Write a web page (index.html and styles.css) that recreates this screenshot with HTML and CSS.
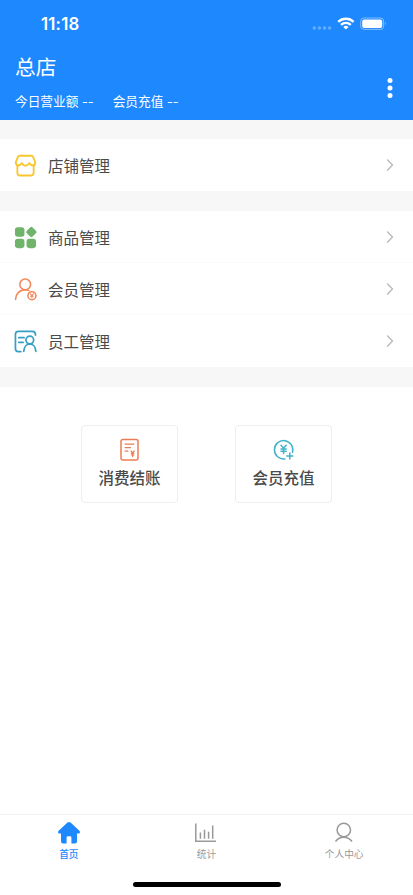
FILE: index.html
```html
<!DOCTYPE html>
<html lang="zh-CN">
<head>
<meta charset="utf-8">
<meta name="viewport" content="width=device-width, initial-scale=1">
<title>总店</title>
<link rel="stylesheet" href="styles.css">
</head>
<body>
<div class="app">
  <header class="header">
    <div class="status">
      <span class="time">11:18</span>
      <svg class="status-icons" width="76" height="16" viewBox="0 0 76 16">
        <g fill="#fff" opacity=".3"><circle cx="3.3" cy="12" r="1.8"/><circle cx="8.4" cy="12" r="1.8"/><circle cx="13.5" cy="12" r="1.8"/><circle cx="18.6" cy="12" r="1.8"/></g>
        <g fill="none" stroke="#fff" stroke-width="2.3"><path d="M27.2 5.800a11.200 11.200 0 0 1 15.400 0M30 8.800a7.200 7.200 0 0 1 9.800 0"/></g>
        <path d="M34.900 13.600l-2.600-2.700a3.800 3.800 0 0 1 5.200 0z" fill="#fff"/>
        <rect x="49.700" y="2" width="23" height="11.400" rx="3.200" fill="none" stroke="#fff" opacity=".45"/>
        <rect x="51.200" y="3.500" width="20" height="8.400" rx="2" fill="#fff"/>
        <path d="M74 5.800q1.600 1.900 0 3.800z" fill="#fff" opacity=".5"/>
      </svg>
    </div>
    <div class="shop">
      <div>
        <h1>总店</h1>
        <div class="stats"><span>今日营业额 <i>--</i></span><span>会员充值 <i>--</i></span></div>
      </div>
      <svg class="more" width="6" height="22" viewBox="0 0 6 22" fill="#fff"><circle cx="3" cy="3.500" r="2.500"/><circle cx="3" cy="11" r="2.500"/><circle cx="3" cy="18.500" r="2.500"/></svg>
    </div>
  </header>

  <main>
    <section class="group">
      <a class="row">
        <svg class="icon" viewBox="0 0 24 24" fill="none" stroke="#f9c62e" stroke-width="1.900" stroke-linejoin="round" stroke-linecap="round"><path d="M6.200 1.800h11.600q1.600 0 2.200 1.500l2.200 5.500q-.2 2.800-2 3.200-2.600.2-4.300-2.500-1.500 2.700-3.900 2.700T8.300 9.500Q6.600 12.200 4 12 2 11.500 1.800 8.800L4 3.300q.6-1.500 2.200-1.500z"/><path d="M3.500 12v7.500q0 2.900 2.900 2.900h11.200q2.900 0 2.900-2.900V12"/></svg>
        <span class="label">店铺管理</span>
        <svg class="arrow" viewBox="0 0 8 14"><path d="M1.200 1.500L6.500 7l-5.300 5.500"/></svg>
      </a>
    </section>
    <section class="group">
      <a class="row">
        <svg class="icon" viewBox="0 0 24 24" fill="#70b46b"><rect x="1" y="1.300" width="9.900" height="9.900" rx="2.900"/><rect x="1" y="13.200" width="9.900" height="9.900" rx="2.900"/><rect x="13.100" y="13.200" width="9.900" height="9.900" rx="2.900"/><rect x="13.800" y="2" width="8.600" height="8.600" rx="1.900" transform="rotate(45 18.100 6.300)"/></svg>
        <span class="label">商品管理</span>
        <svg class="arrow" viewBox="0 0 8 14"><path d="M1.200 1.500L6.500 7l-5.300 5.500"/></svg>
      </a>
      <a class="row">
        <svg class="icon" viewBox="0 0 24 24" fill="none" stroke="#f58659" stroke-width="1.600" stroke-linecap="round"><circle cx="11.700" cy="6.700" r="5.600"/><path d="M1.600 22.300c.2-5.500 3.900-10 10.100-10 1.600 0 2.800.4 3.800.8"/><circle cx="18.700" cy="18.500" r="4.200"/><path d="M17 16.500l1.700 1.900 1.700-1.900M18.700 18.400v2.400M17.300 19h2.800" stroke-width="1.100"/></svg>
        <span class="label">会员管理</span>
        <svg class="arrow" viewBox="0 0 8 14"><path d="M1.200 1.500L6.500 7l-5.300 5.500"/></svg>
      </a>
      <a class="row">
        <svg class="icon" viewBox="0 0 24 24" fill="none" stroke="#369fc4" stroke-width="1.800" stroke-linecap="round"><path d="M7.200 22.500H4.500q-3 0-3-3V4.500q0-3 3-3h15q2.900 0 2.900 3.800M5 8h5.500M5 13h4.500"/><circle cx="16.500" cy="10.500" r="4"/><path d="M10.200 22.200c.3-4.500 2.800-7.600 6.300-7.600s6 3.100 6.300 7.600"/></svg>
        <span class="label">员工管理</span>
        <svg class="arrow" viewBox="0 0 8 14"><path d="M1.200 1.500L6.500 7l-5.300 5.500"/></svg>
      </a>
    </section>
    <section class="actions">
      <a class="card">
        <svg width="22" height="24" viewBox="0 0 22 24" fill="none" stroke="#ef7b55" stroke-width="1.500" stroke-linecap="round"><rect x="2" y="1.500" width="17" height="20.400" rx="2"/><path d="M6.200 6.200h8.600M6.200 9.700h5.200M6.200 13.200h2.600" stroke-width="1.300"/><path d="M12 13l1.600 1.800 1.600-1.800M13.600 15v3.500M12.300 15.300h2.600M12.300 17h2.600" stroke-width="1.200"/></svg>
        <span>消费结账</span>
      </a>
      <a class="card">
        <svg width="22" height="24" viewBox="0 0 22 24" fill="none" stroke="#42b1c9" stroke-width="1.500" stroke-linecap="round"><path d="M11.900 20.900a9.200 9.200 0 1 1 7.600-6.700"/><path d="M8 7.200l2.600 3 2.600-3M10.600 10.200v5.300M8 10.900h5.200M8 13.200h5.200M16.800 14.900v6M13.800 17.900h6"/></svg>
        <span>会员充值</span>
      </a>
    </section>
  </main>

  <nav class="tabs">
    <a class="tab active">
      <svg width="24" height="24" viewBox="0 0 24 24" fill="#1e88ff"><path d="M10.500 1.600q1.500-1.100 3 0l8.900 8.200q.9.900.5 1.900-.3.700-1.200.7H20v8.100q0 2-2 2h-3.600v-6q0-1.200-1.200-1.200h-2.400q-1.200 0-1.200 1.200v6H6q-2 0-2-2v-8.100H2.300q-.9 0-1.200-.7-.4-1 .5-1.900z"/></svg>
      <span>首页</span>
    </a>
    <a class="tab">
      <svg width="24" height="24" viewBox="0 0 24 24" fill="none" stroke="#999" stroke-width="1.500"><path d="M1.800 2.500v17.700H22M6.400 11.500v6.200M10.500 8.700v9M14.600 10.700v7M18.700 4.500v13.200"/></svg>
      <span>统计</span>
    </a>
    <a class="tab">
      <svg width="24" height="24" viewBox="0 0 24 24" fill="none" stroke="#999" stroke-width="1.500"><circle cx="11.800" cy="9" r="6.700"/><path d="M3.500 20.500q3.200-4.200 8.300-4.200t8.200 4.200"/></svg>
      <span>个人中心</span>
    </a>
  </nav>
  <div class="home-bar"></div>
</div>
</body>
</html>
```
FILE: styles.css
```css
* { box-sizing: border-box; }
body {
  margin: 0;
  background: #fff;
  color: #4a4a4a;
  font-family: "Liberation Sans", "Noto Sans CJK SC", sans-serif;
}
.app { height: 895px; display: flex; flex-direction: column; overflow: hidden; }
.header { height: 120px; background: #1e88ff; color: #fff; }
.status {
  height: 48px;
  padding: 0 26px 0 41px;
  display: flex;
  align-items: center;
  justify-content: space-between;
}
.time { font: 600 16.800px/20px Inter, sans-serif; letter-spacing: .2px; }
.shop {
  padding: 5px 20px 0 15px;
  display: flex;
  justify-content: space-between;
}
h1 { margin: 0; font-size: 20.700px; line-height: 30px; font-weight: 400; }
.stats { display: flex; gap: 19px; margin-top: 10px; font-size: 12.700px; line-height: 18px; }
.stats i { font-family: Inter, sans-serif; font-style: normal; }
.more { margin-top: 24px; }
.group { border-top: 20px solid #f7f7f7; }
main { flex: 1; }
.group:first-child { border-top-width: 19px; }
.row { height: 52px; padding: 0 19px 0 14px; display: flex; align-items: center; }
.row + .row { box-shadow: 0 -1px #fafafa; }
.icon { width: 23px; height: 23px; }
.label { flex: 1; margin: 3px 0 0 11px; font-size: 15.500px; line-height: 24px; }
.arrow { width: 8px; height: 14px; fill: none; stroke: #b8b8b8; stroke-width: 1.300; }
.actions {
  border-top: 20px solid #f7f7f7;
  padding: 38px 81px 0;
  display: flex;
  justify-content: space-between;
}
.card {
  width: 97px;
  height: 78px;
  padding-top: 12px;
  border: 1.500px solid #eee;
  border-radius: 4px;
  display: flex;
  flex-direction: column;
  align-items: center;
  font-size: 15.500px;
  line-height: 24px;
  font-weight: 500;
}
.card span { margin-top: 5px; }
.tabs {
  height: 68px;
  border-top: 1px solid #f3f3f3;
  display: grid;
  grid-template-columns: repeat(3, 1fr);
}
.tab {
  padding-top: 6px;
  display: flex;
  flex-direction: column;
  align-items: center;
  color: #999;
  font-size: 9.700px;
  line-height: 14px;
}
.tab span { margin-top: 3px; }
.active { color: #1e88ff; font-weight: 500; }
.home-bar { width: 148px; height: 5px; margin: 0 auto 8px; border-radius: 3px; background: #000; }
```
